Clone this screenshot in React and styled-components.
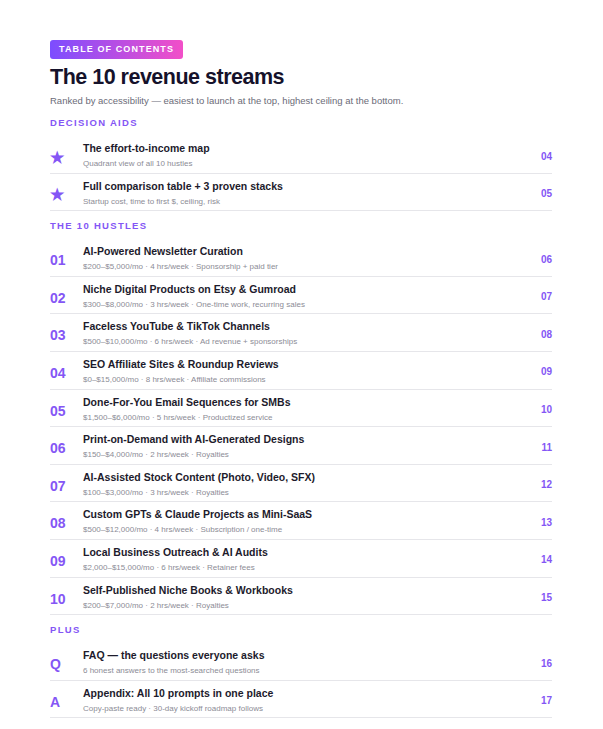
import styled, { createGlobalStyle } from "styled-components"

const Global = createGlobalStyle`
  body { margin: 0; background: #fff; font-family: "Liberation Sans", Arial, sans-serif; }
`

const aids = [
  { mark: "★", title: "The effort-to-income map", sub: "Quadrant view of all 10 hustles", page: "04" },
  { mark: "★", title: "Full comparison table + 3 proven stacks", sub: "Startup cost, time to first $, ceiling, risk", page: "05" },
]

const hustles = [
  ["AI-Powered Newsletter Curation", "$200–$5,000/mo · 4 hrs/week · Sponsorship + paid tier", "06"],
  ["Niche Digital Products on Etsy & Gumroad", "$300–$8,000/mo · 3 hrs/week · One-time work, recurring sales", "07"],
  ["Faceless YouTube & TikTok Channels", "$500–$10,000/mo · 6 hrs/week · Ad revenue + sponsorships", "08"],
  ["SEO Affiliate Sites & Roundup Reviews", "$0–$15,000/mo · 8 hrs/week · Affiliate commissions", "09"],
  ["Done-For-You Email Sequences for SMBs", "$1,500–$6,000/mo · 5 hrs/week · Productized service", "10"],
  ["Print-on-Demand with AI-Generated Designs", "$150–$4,000/mo · 2 hrs/week · Royalties", "11"],
  ["AI-Assisted Stock Content (Photo, Video, SFX)", "$100–$3,000/mo · 3 hrs/week · Royalties", "12"],
  ["Custom GPTs & Claude Projects as Mini-SaaS", "$500–$12,000/mo · 4 hrs/week · Subscription / one-time", "13"],
  ["Local Business Outreach & AI Audits", "$2,000–$15,000/mo · 6 hrs/week · Retainer fees", "14"],
  ["Self-Published Niche Books & Workbooks", "$200–$7,000/mo · 2 hrs/week · Royalties", "15"],
].map(([title, sub, page], i) => ({ mark: String(i + 1).padStart(2, "0"), title, sub, page }))

const plus = [
  { mark: "Q", title: "FAQ — the questions everyone asks", sub: "6 honest answers to the most-searched questions", page: "16" },
  { mark: "A", title: "Appendix: All 10 prompts in one place", sub: "Copy-paste ready · 30-day kickoff roadmap follows", page: "17" },
]

function Section({ label, items, star }) {
  return (
    <>
      <Label>{label}</Label>
      <List>
        {items.map((it) => (
          <Row key={it.title}>
            <Mark $star={star}>{it.mark}</Mark>
            <Body>
              <RowTitle>{it.title}</RowTitle>
              <RowSub>{it.sub}</RowSub>
            </Body>
            <Page>{it.page}</Page>
          </Row>
        ))}
      </List>
    </>
  )
}

export default function App() {
  return (
    <>
      <Global />
      <Sheet>
        <Badge>TABLE OF CONTENTS</Badge>
        <Title>The 10 revenue streams</Title>
        <Lead>Ranked by accessibility — easiest to launch at the top, highest ceiling at the bottom.</Lead>
        <Section label="DECISION AIDS" items={aids} star />
        <Section label="THE 10 HUSTLES" items={hustles} />
        <Section label="PLUS" items={plus} />
      </Sheet>
    </>
  )
}

const Sheet = styled.div`
  width: 502px;
  padding: 38px 51px 0 50px;
`

const Badge = styled.div`
  display: inline-block;
  background: linear-gradient(90deg, #7c4dff, #f24fc8);
  color: #fff;
  font-size: 9px;
  font-weight: 700;
  letter-spacing: 1.1px;
  padding: 4px 9px 5px;
  border-radius: 3px;
`

const Title = styled.h1`
  margin: 5px 0 0;
  font-size: 21.5px;
  line-height: 26px;
  font-weight: 700;
  color: #15122b;
  letter-spacing: -0.5px;
`

const Lead = styled.p`
  margin: 4px 0 0;
  font-size: 9.5px;
  line-height: 14px;
  color: #6b6b78;
`

const Label = styled.div`
  margin-top: 8px;
  font-size: 9.5px;
  line-height: 14px;
  font-weight: 700;
  letter-spacing: 1.3px;
  color: #8456f5;
`

const List = styled.div`
  margin-top: 6px;
  margin-bottom: 3px;
`

const Row = styled.div`
  display: flex;
  align-items: center;
  padding: 5px 0 3.6px;
  border-bottom: 1px solid #e6e6ea;
`

const Mark = styled.div`
  width: 33px;
  flex: none;
  font-size: ${(p) => (p.$star ? "16px" : "14px")};
  font-weight: 700;
  color: #8456f5;
  padding-top: 4px;
`

const Body = styled.div`
  flex: 1;
`

const RowTitle = styled.div`
  font-size: 10.5px;
  line-height: 15px;
  font-weight: 700;
  color: #1d1b2c;
`

const RowSub = styled.div`
  margin-top: 2px;
  font-size: 8px;
  line-height: 11px;
  color: #8c8c96;
`

const Page = styled.div`
  font-size: 10px;
  font-weight: 700;
  color: #8456f5;
  padding-top: 2px;
`
